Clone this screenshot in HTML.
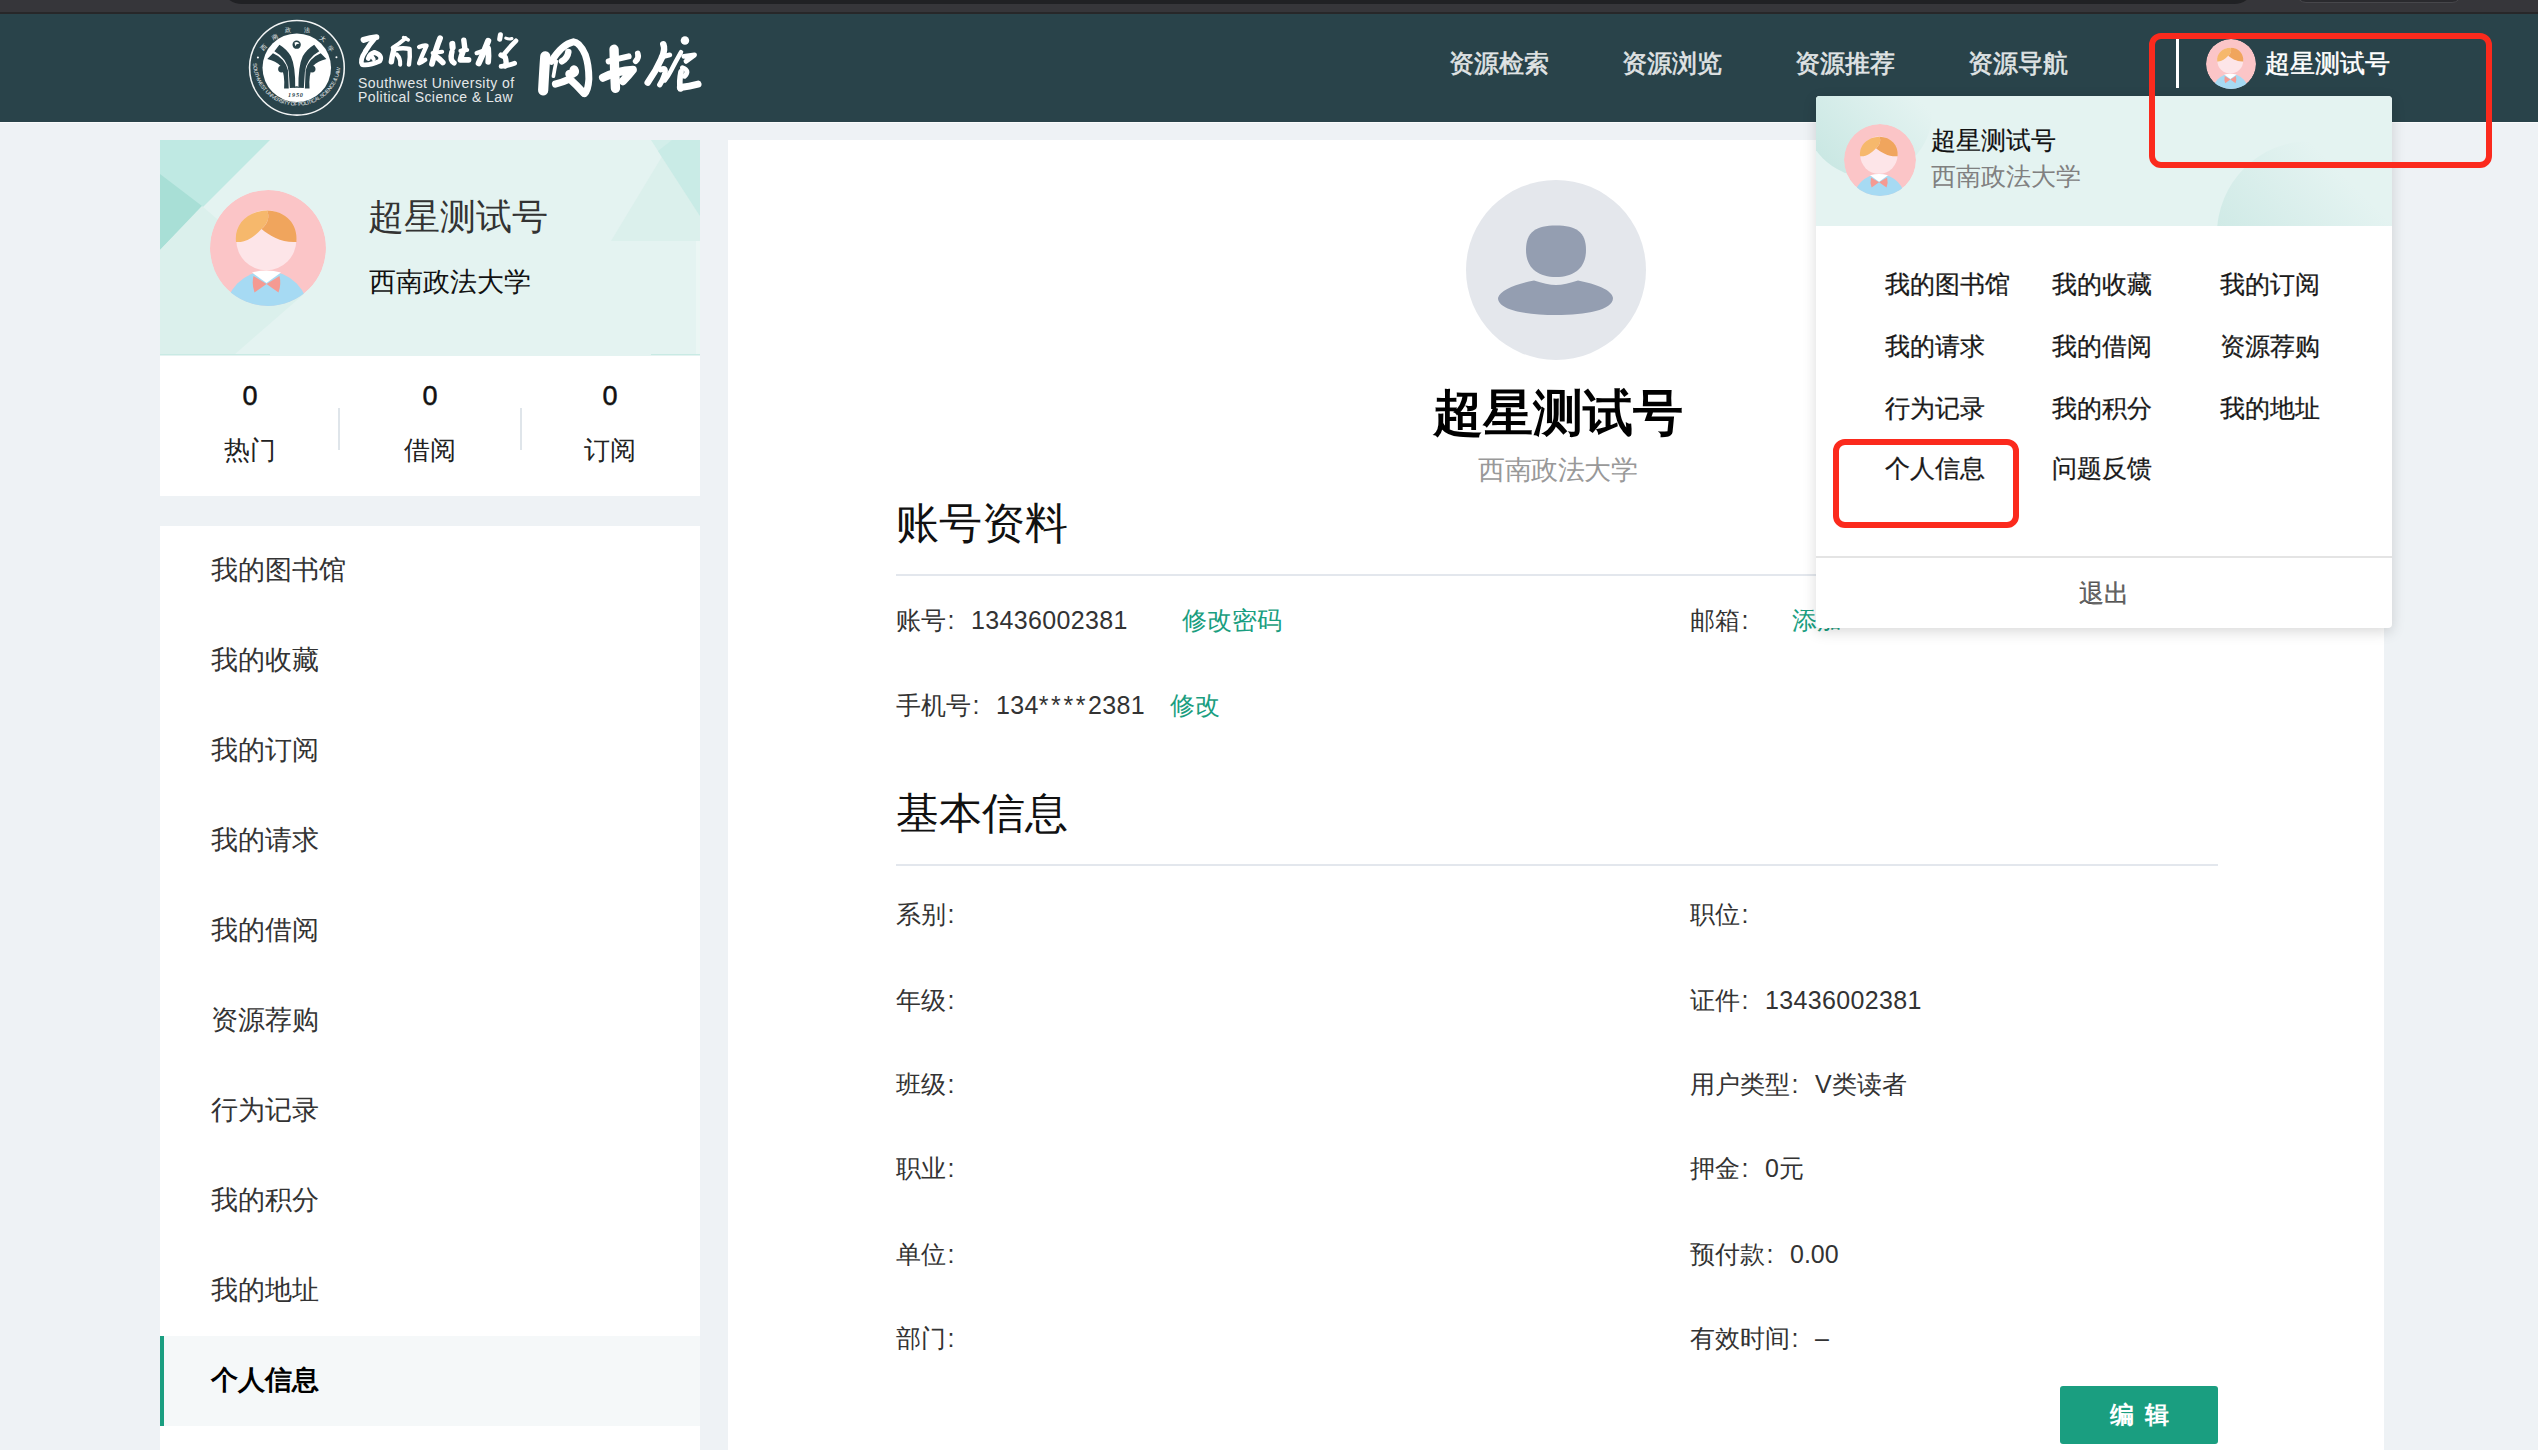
<!DOCTYPE html>
<html><head><meta charset="utf-8">
<style>
*{margin:0;padding:0;box-sizing:border-box}
html,body{width:2538px;height:1450px;overflow:hidden;background:#eef2f5;font-family:"Liberation Sans",sans-serif;color:#333}
.a{position:absolute;white-space:nowrap}
#chrome{position:absolute;left:0;top:0;width:2538px;height:14px;background:#36363a;overflow:hidden}
#chrome .tab1{position:absolute;left:224px;top:-10px;width:2028px;height:14px;background:#202124;border-radius:0 0 18px 18px / 0 0 14px 14px}
#chrome .tab2{position:absolute;left:2296px;top:-10px;width:166px;height:13px;background:#2a2a2e;border:1px solid #47474b;border-radius:0 0 10px 10px}
#chrome .line{position:absolute;left:0;top:12px;width:2538px;height:2px;background:#272729}
#hdr{position:absolute;left:0;top:14px;width:2538px;height:108px;background:#29434a}
#hdrline{position:absolute;left:0;top:122px;width:2538px;height:1px;background:#fafbfb}
.nav{position:absolute;top:44.5px;font-size:25px;color:#e0e4e5;line-height:36px;-webkit-text-stroke:0.6px #e0e4e5}

/* left card */
#lc{position:absolute;left:160px;top:140px;width:540px;height:356px;background:#fff;overflow:hidden}
#lc .top{position:absolute;left:0;top:0;width:540px;height:216px;background:#e4f3f1;overflow:hidden}
.t{font-size:26px;color:#333;line-height:36px}
.stat-n{position:absolute;top:378px;font-size:27px;color:#111;-webkit-text-stroke:0.5px #111;line-height:36px;text-align:center;width:180px}
.stat-l{position:absolute;top:432px;font-size:26px;color:#222;line-height:36px;text-align:center;width:180px}
.sep{position:absolute;top:408px;width:2px;height:42px;background:#dfe5ea}

#menu{position:absolute;left:160px;top:526px;width:540px;height:924px;background:#fff}
.mi{position:absolute;left:51px;font-size:26.7px;color:#333;line-height:36px}

#main{position:absolute;left:728px;top:140px;width:1656px;height:1310px;background:#fff}
.h2{position:absolute;left:168px;font-size:43px;color:#111;line-height:56px}
.hline{position:absolute;left:168px;width:1322px;height:2px;background:#e3e7ed}
.r{position:absolute;font-size:25px;color:#333;line-height:36px}
.g{color:#1a9e80}
.c{font-style:normal;display:inline-block;width:25px;padding-left:1.5px}
.d{letter-spacing:0.35px}
.st{letter-spacing:2.6px}

#dd{position:absolute;left:1816px;top:96px;width:576px;height:532px;background:#fff;border-radius:4px;box-shadow:0 4px 14px rgba(0,0,0,0.15);overflow:hidden}
#dd .top{position:absolute;left:0;top:0;width:576px;height:130px;background:#e4f3f1;overflow:hidden}
.dm{position:absolute;font-size:25px;color:#1a1a1a;line-height:36px;-webkit-text-stroke:0.25px #1a1a1a}
.redbox{position:absolute;border:6px solid #fb2a1d;border-radius:12px}
</style></head>
<body>
<svg width="0" height="0" style="position:absolute">
<defs>
<clipPath id="avc"><circle cx="58" cy="58" r="58"/></clipPath>
<symbol id="boy" viewBox="0 0 116 116">
 <g clip-path="url(#avc)">
  <circle cx="58" cy="58" r="58" fill="#fbc5c7"/>
  <ellipse cx="57" cy="124" rx="42" ry="43" fill="#a6daf3"/>
  <circle cx="56.3" cy="50.3" r="30" fill="#fde5e8"/>
  <path d="M26,52 C24,34 38,21 57,20.5 C60,26 58,34 51.5,39 C44,47 36,53 26,52 Z" fill="#f6b86c"/>
  <path d="M57,20.5 C76,21 88,34 86.5,52 C72,53 60,46 51.5,39 C58,34 60,26 57,20.5 Z" fill="#f0a55d"/>
  <path d="M42,82.5 Q56.5,78.5 71,82.5 L56.5,93 Z" fill="#fff"/>
  <path d="M43.5,86 L56.5,94 L44.5,102.5 Q41.5,94 43.5,86 Z" fill="#f59a92"/>
  <path d="M69.5,86 L56.5,94 L68.5,102.5 Q71.5,94 69.5,86 Z" fill="#f59a92"/>
 </g>
</symbol>
<linearGradient id="blobg" x1="0" y1="1" x2="1" y2="0">
 <stop offset="0" stop-color="#c4e5e0"/><stop offset="0.75" stop-color="#e4f3f1"/>
</linearGradient>
</defs></svg>
<div id="chrome"><div class="tab1"></div><div class="tab2"></div><div class="line"></div></div>
<div id="hdr"></div>
<div id="hdrline"></div>

<!-- logo -->
<svg class="a" style="left:245px;top:16px" width="105" height="104" viewBox="0 0 1464 1450">
  <circle cx="724" cy="722" r="660" fill="none" stroke="#f2f4f4" stroke-width="22"/>
  <circle cx="722" cy="722" r="478" fill="#fff"/>
  <defs><path id="arcb" d="M112,640 A612,612 0 0 0 1336,640"/></defs>
  <text font-family="Liberation Sans" font-size="74" fill="#e9eded" letter-spacing="-5"><textPath href="#arcb" startOffset="1%">SOUTHWEST UNIVERSITY OF POLITICAL SCIENCE &amp; LAW</textPath></text>
  <circle cx="180" cy="580" r="14" fill="#fff"/><circle cx="1275" cy="575" r="14" fill="#fff"/>
  <g fill="#e9eded" font-size="85"><text x="210" y="470" transform="rotate(-45 250 430)">西</text><text x="380" y="320" transform="rotate(-25 420 290)">南</text><text x="560" y="230">政</text><text x="820" y="230">法</text><text x="1040" y="340" transform="rotate(30 1080 300)">大</text><text x="1160" y="480" transform="rotate(45 1200 440)">学</text></g>
  <circle cx="720" cy="400" r="58" fill="#29434a"/>
  <path d="M690,370 Q740,350 760,390 Q720,380 700,420 Z" fill="#fff"/>
  <path d="M480,400 L410,490 Q590,590 610,780 L625,1005 L700,1000 Q705,700 640,560 Q580,460 480,400 Z" fill="#29434a"/>
  <path d="M310,600 L390,520 Q560,590 600,760 L610,1010 L545,1010 Q560,820 500,700 Q430,630 310,600 Z" fill="#29434a"/>
  <circle cx="510" cy="740" r="48" fill="#29434a"/>
  <path d="M965,400 L1035,490 Q855,590 835,780 L820,1005 L745,1000 Q740,700 805,560 Q865,460 965,400 Z" fill="#29434a"/>
  <path d="M1135,600 L1055,520 Q885,590 845,760 L835,1010 L900,1010 Q885,820 945,700 Q1015,630 1135,600 Z" fill="#29434a"/>
  <circle cx="935" cy="740" r="48" fill="#29434a"/>
  <path d="M680,1000 Q720,960 760,1000 Z" fill="#29434a"/>
  <text x="600" y="1135" font-family="Liberation Serif" font-weight="bold" font-style="italic" font-size="86" fill="#29434a" letter-spacing="12">1950</text>
</svg>
<div class="a" style="left:358px;top:77px;font-size:14px;line-height:13.5px;color:#e4e8e9;letter-spacing:0.45px">Southwest University of<br>Political Science &amp; Law</div>
<svg class="a" style="left:352px;top:28px" width="172" height="46" viewBox="0 0 2538 679">
 <g fill="none" stroke="#fff" stroke-linecap="round" stroke-linejoin="round">
  <path d="M170,175 Q270,140 360,135" stroke-width="87"/>
  <path d="M340,150 Q260,240 200,340" stroke-width="72"/>
  <path d="M200,340 Q110,470 150,540 Q250,560 410,490 Q460,400 330,360 Q260,380 240,450" stroke-width="70"/>
  <path d="M280,400 L320,460" stroke-width="58"/>
  <path d="M790,150 Q700,230 600,290" stroke-width="58"/>
  <path d="M760,140 L830,175" stroke-width="51"/>
  <path d="M620,310 Q590,420 580,500" stroke-width="80"/>
  <path d="M640,310 Q760,290 850,310 Q860,430 840,540" stroke-width="65"/>
  <path d="M660,390 Q720,450 710,540" stroke-width="61"/>
  <path d="M990,280 Q1060,250 1100,260 Q1040,390 990,520 Q1040,500 1080,470" stroke-width="65"/>
  <path d="M1300,150 Q1240,300 1180,530" stroke-width="84"/>
  <path d="M1190,370 L1330,350" stroke-width="61"/>
  <path d="M1220,410 Q1300,460 1340,510" stroke-width="84"/>
  <path d="M1480,235 L1485,290" stroke-width="90"/>
  <path d="M1475,350 Q1440,470 1505,515" stroke-width="80"/>
  <path d="M1650,180 L1665,300" stroke-width="80"/>
  <path d="M1600,335 L1700,325" stroke-width="61"/>
  <path d="M1640,340 Q1610,420 1600,470 L1720,470" stroke-width="84"/>
  <path d="M2010,190 Q1950,350 1870,520" stroke-width="90"/>
  <path d="M1840,370 L1990,320" stroke-width="65"/>
  <path d="M2010,300 Q2020,420 2010,500" stroke-width="84"/>
  <path d="M2190,100 L2180,165" stroke-width="75"/>
  <path d="M2270,150 Q2320,170 2360,155" stroke-width="46"/>
  <path d="M2420,190 Q2320,290 2250,380" stroke-width="70"/>
  <path d="M2200,400 L2260,430 Q2290,520 2260,560" stroke-width="80"/>
  <path d="M2200,565 Q2300,560 2400,520" stroke-width="70"/>
 </g>
</svg>
<svg class="a" style="left:530px;top:28px" width="180" height="76" viewBox="0 0 2538 1072">
 <g fill="none" stroke="#fff" stroke-linecap="round" stroke-linejoin="round">
  <path d="M215,400 Q200,600 185,880" stroke-width="144"/>
  <path d="M300,470 Q450,230 610,195 Q700,200 780,380 Q830,520 830,720 Q820,880 770,925" stroke-width="98"/>
  <path d="M540,340 Q530,420 450,470" stroke-width="92"/>
  <path d="M370,470 Q350,560 330,680" stroke-width="52"/>
  <path d="M620,590 Q650,640 560,650" stroke-width="126"/>
  <path d="M360,790 Q450,770 560,720 Q650,800 760,920" stroke-width="103"/>
  <path d="M1185,300 Q1190,560 1205,850" stroke-width="132"/>
  <path d="M1110,470 Q1250,430 1390,400" stroke-width="86"/>
  <path d="M1030,700 Q1230,600 1450,590 Q1380,680 1310,750" stroke-width="115"/>
  <path d="M1520,360 Q1540,420 1490,470" stroke-width="80"/>
  <circle cx="2185" cy="175" r="60" fill="#fff" stroke="none"/>
  <path d="M1880,230 Q1910,300 1860,420 Q1780,600 1660,770" stroke-width="92"/>
  <path d="M1850,410 L1970,380" stroke-width="69"/>
  <path d="M1840,590 Q1930,540 1900,650 Q1870,740 1830,800" stroke-width="75"/>
  <path d="M2130,340 Q2050,480 1990,600 Q1950,680 1900,740" stroke-width="63"/>
  <path d="M2170,400 L2320,380 L2200,470" stroke-width="69"/>
  <path d="M2150,560 Q2260,600 2180,680" stroke-width="69"/>
  <path d="M2120,840 Q2250,820 2370,790" stroke-width="98"/>
  <path d="M2130,620 Q2100,760 2120,860" stroke-width="80"/>
 </g>
</svg>


<div class="nav" style="left:1449px">资源检索</div>
<div class="nav" style="left:1622px">资源浏览</div>
<div class="nav" style="left:1795px">资源推荐</div>
<div class="nav" style="left:1968px">资源导航</div>

<!-- left card -->
<div id="lc">
  <div class="top">
    <svg width="540" height="215" style="position:absolute;left:0;top:0">
      <polygon points="0,0 110,0 0,110" fill="#bfe9e3"/>
      <polygon points="0,34 42,66 0,110" fill="#a8dfd6"/>
      <polygon points="0,110 42,66 144,154 74,215 0,215" fill="#dbf0ec"/>
      <polygon points="512,0 451,101 540,101 540,0" fill="#dbf0ec"/>
      <polygon points="491,0 540,0 540,76" fill="#d3eeea"/>
      <polygon points="512,0 540,0 540,76 498,11" fill="#c9ebe6"/>
      <rect x="536" y="101" width="4" height="115" fill="#ebf6f4"/>
      <rect x="491" y="214" width="49" height="2" fill="#c9eae4"/><rect x="0" y="214" width="110" height="2" fill="#c9eae4"/>
    </svg>
  </div>
</div>
<svg class="a" style="left:210px;top:190px" width="116" height="116"><use href="#boy"/></svg>
<div class="a" style="left:368px;top:192px;font-size:36px;line-height:50px;color:#333">超星测试号</div>
<div class="a" style="left:369px;top:264px;font-size:26.5px;line-height:36px;color:#111">西南政法大学</div>
<div class="stat-n a" style="left:160px">0</div>
<div class="stat-n a" style="left:340px">0</div>
<div class="stat-n a" style="left:520px">0</div>
<div class="stat-l a" style="left:160px">热门</div>
<div class="stat-l a" style="left:340px">借阅</div>
<div class="stat-l a" style="left:520px">订阅</div>
<div class="sep" style="left:338px"></div>
<div class="sep" style="left:520px"></div>

<!-- menu -->
<div id="menu">
  <div class="mi" style="top:26px">我的图书馆</div>
  <div class="mi" style="top:116px">我的收藏</div>
  <div class="mi" style="top:206px">我的订阅</div>
  <div class="mi" style="top:296px">我的请求</div>
  <div class="mi" style="top:386px">我的借阅</div>
  <div class="mi" style="top:476px">资源荐购</div>
  <div class="mi" style="top:566px">行为记录</div>
  <div class="mi" style="top:656px">我的积分</div>
  <div class="mi" style="top:746px">我的地址</div>
  <div style="position:absolute;left:0;top:810px;width:540px;height:90px;background:#f5f8f9;border-left:4px solid #1a9e80"></div>
  <div class="mi" style="top:836px;font-weight:bold;color:#000">个人信息</div>
</div>

<!-- main -->
<div id="main"></div>

<svg class="a" style="left:1466px;top:180px" width="180" height="180" viewBox="0 0 180 180">
 <circle cx="90" cy="90" r="90" fill="#e4e7ec"/>
 <path d="M90,45.6 C110,45.6 120,52 120,70 C120,88 108,97 90,97 C72,97 60,88 60,70 C60,52 70,45.6 90,45.6 Z" fill="#949eb1"/>
 <path d="M32,118 C34,110 50,104 68,100.5 C76,103 84,105 90,105 C96,105 104,103 112,100.5 C130,104 146,110 147,118 C147,130 120,135 90,135 C60,135 32,130 32,118 Z" fill="#949eb1"/>
</svg>
<div class="a" style="left:1432.5px;top:380px;font-size:50px;line-height:66px;color:#000;font-weight:bold">超星测试号</div>
<div class="a" style="left:1478px;top:452px;font-size:27px;letter-spacing:-0.4px;line-height:36px;color:#999">西南政法大学</div>
<div class="h2" style="left:896px;top:495px">账号资料</div>
<div class="hline" style="left:896px;top:574px"></div>
<div class="r" style="left:896px;top:602px">账号<i class="c">:</i><span class="d">13436002381</span></div>
<div class="r g" style="left:1182px;top:602px">修改密码</div>
<div class="r" style="left:1690px;top:602px">邮箱<i class="c">:</i></div>
<div class="r g" style="left:1792px;top:602px">添加</div>
<div class="r" style="left:896px;top:687px">手机号<i class="c">:</i><span class="d">134</span><span class="st">****</span><span class="d">2381</span></div>
<div class="r g" style="left:1170px;top:687px">修改</div>

<div class="h2" style="left:896px;top:785px">基本信息</div>
<div class="hline" style="left:896px;top:864px"></div>

<div class="r" style="left:896px;top:896px">系别<i class="c">:</i></div>
<div class="r" style="left:896px;top:982px">年级<i class="c">:</i></div>
<div class="r" style="left:896px;top:1066px">班级<i class="c">:</i></div>
<div class="r" style="left:896px;top:1150px">职业<i class="c">:</i></div>
<div class="r" style="left:896px;top:1236px">单位<i class="c">:</i></div>
<div class="r" style="left:896px;top:1320px">部门<i class="c">:</i></div>

<div class="r" style="left:1690px;top:896px">职位<i class="c">:</i></div>
<div class="r" style="left:1690px;top:982px">证件<i class="c">:</i><span class="d">13436002381</span></div>
<div class="r" style="left:1690px;top:1066px">用户类型<i class="c">:</i>V类读者</div>
<div class="r" style="left:1690px;top:1150px">押金<i class="c">:</i>0元</div>
<div class="r" style="left:1690px;top:1236px">预付款<i class="c">:</i>0.00</div>
<div class="r" style="left:1690px;top:1320px">有效时间<i class="c">:</i>–</div>

<div class="a" style="left:2060px;top:1386px;width:158px;height:58px;background:#1a9e80;border-radius:3px;color:#fff;font-size:24px;font-weight:bold;text-align:center;line-height:58px;letter-spacing:11px;text-indent:11px">编辑</div>

<!-- dropdown -->
<div id="dd">
  <div class="top">
   <svg width="576" height="130" style="position:absolute;left:0;top:0">
    <circle cx="52" cy="17" r="64" fill="url(#blobg)"/>
    <circle cx="494" cy="138" r="93" fill="url(#blobg)"/>
   </svg>
   <svg style="position:absolute;left:28px;top:28px" width="72" height="72"><use href="#boy"/></svg>
   <div style="position:absolute;left:115px;top:26px;font-size:25px;line-height:36px;color:#111;-webkit-text-stroke:0.2px #111">超星测试号</div>
   <div style="position:absolute;left:115px;top:62px;font-size:25px;line-height:36px;color:#808080">西南政法大学</div>
  </div>
  <div class="dm" style="left:69px;top:170px">我的图书馆</div>
  <div class="dm" style="left:236px;top:170px">我的收藏</div>
  <div class="dm" style="left:404px;top:170px">我的订阅</div>
  <div class="dm" style="left:69px;top:232px">我的请求</div>
  <div class="dm" style="left:236px;top:232px">我的借阅</div>
  <div class="dm" style="left:404px;top:232px">资源荐购</div>
  <div class="dm" style="left:69px;top:294px">行为记录</div>
  <div class="dm" style="left:236px;top:294px">我的积分</div>
  <div class="dm" style="left:404px;top:294px">我的地址</div>
  <div class="dm" style="left:69px;top:354px">个人信息</div>
  <div class="dm" style="left:236px;top:354px">问题反馈</div>
  <div style="position:absolute;left:0;top:460px;width:576px;height:2px;background:#e4e4e4"></div>
  <div class="dm" style="left:0;width:576px;text-align:center;top:479px;color:#666">退出</div>
</div>

<!-- header user -->
<div class="a" style="left:2176px;top:39px;width:2.5px;height:49px;background:#fff"></div>
<svg class="a" style="left:2206px;top:38.5px" width="50" height="50"><use href="#boy"/></svg>
<div class="a" style="left:2265px;top:45px;font-size:25px;color:#fff;line-height:36px;-webkit-text-stroke:0.5px #fff">超星测试号</div>

<div class="redbox" style="left:2149px;top:33px;width:343px;height:135px"></div>
<div class="redbox" style="left:1833px;top:438.5px;width:186px;height:89px"></div>

</body></html>
